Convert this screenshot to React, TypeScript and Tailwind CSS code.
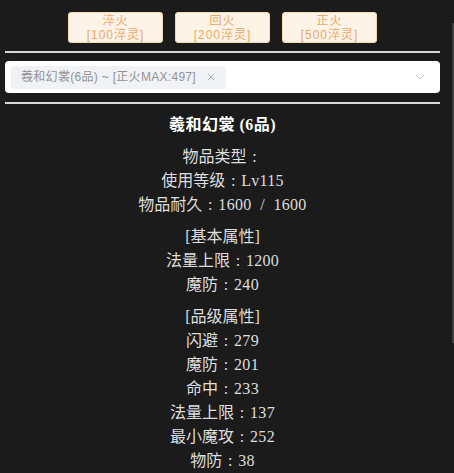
import React from 'react'
import { X, ChevronDown } from 'lucide-react'

const buttons = [
  { name: '淬火', cost: '[100淬灵]' },
  { name: '回火', cost: '[200淬灵]' },
  { name: '正火', cost: '[500淬灵]' },
]

const groups = [
  ['物品类型：', '使用等级：Lv115', '物品耐久：1600  /  1600'],
  ['[基本属性]', '法量上限：1200', '魔防：240'],
  ['[品级属性]', '闪避：279', '魔防：201', '命中：233', '法量上限：137', '最小魔攻：252', '物防：38'],
]

const serif = { fontFamily: '"Liberation Serif", "Noto Sans CJK SC", serif' }

// full-width colon drawn centred in its cell, as the original font does
function Line({ text }: { text: string }) {
  const [label, value] = text.split('：')
  if (value === undefined) return <div>{text}</div>
  return (
    <div className="flex whitespace-pre">
      <span>{label}</span>
      <span className="inline-block w-[16px] text-center">:</span>
      <span className="tracking-[0.3px]">{value}</span>
    </div>
  )
}

export default function App() {
  return (
    <div className="relative h-[473px] w-[454px] overflow-hidden bg-[#1b1b1b] pl-[5px]">
      {/* scrollbar strip */}
      <div className="absolute right-0 top-[23px] h-[320px] w-[2px] bg-[#3d3d3d]" />

      <div className="w-[435px]">
        {/* Action buttons */}
        <div className="flex justify-center gap-[12px] pt-[12px]">
          {buttons.map(b => (
            <button
              key={b.name}
              className="flex h-[31px] w-[95px] flex-col items-center justify-center rounded-[3px] border border-[#f5dab1] bg-[#fdf3e6] text-[12px] leading-[14px] tracking-[1px] text-[#eaa86a]"
              style={{ fontFamily: '"Liberation Sans", "Noto Sans CJK SC", sans-serif' }}
            >
              <span>{b.name}</span>
              <span>{b.cost}</span>
            </button>
          ))}
        </div>

        <div className="mt-[8px] h-[2px] bg-[#d9d9d9]" />

        {/* Select */}
        <div className="mt-[8px] flex h-[32px] items-center rounded-[4px] bg-white pl-[6px] pr-[12px]">
          <div
            className="flex h-[23px] items-center gap-[9px] rounded-[3px] bg-[#f0f2f5] pl-[10px] pr-[9px] text-[12px] tracking-[0.3px] text-[#909399]"
            style={{ fontFamily: '"Liberation Sans", "Noto Sans CJK SC", sans-serif' }}
          >
            <span>羲和幻裳(6品) ~ [正火MAX:497]</span>
            <X size={12} strokeWidth={1.5} />
          </div>
          <div className="flex-1" />
          <ChevronDown size={16} strokeWidth={1.5} className="text-[#c0c4cc]" />
        </div>

        <div className="mt-[9px] h-[2px] bg-[#d9d9d9]" />

        {/* Item details */}
        <div className="flex flex-col items-center text-[16px] leading-[24px] text-[#dedede]" style={serif}>
          <div className="mt-[9px] font-semibold tracking-[0.5px] text-white">羲和幻裳 (6品)</div>
          {groups.map((g, i) => (
            <div key={i} className="mt-[8px] flex flex-col items-center">
              {g.map(line => (
                <Line key={line} text={line} />
              ))}
            </div>
          ))}
        </div>
      </div>
    </div>
  )
}
